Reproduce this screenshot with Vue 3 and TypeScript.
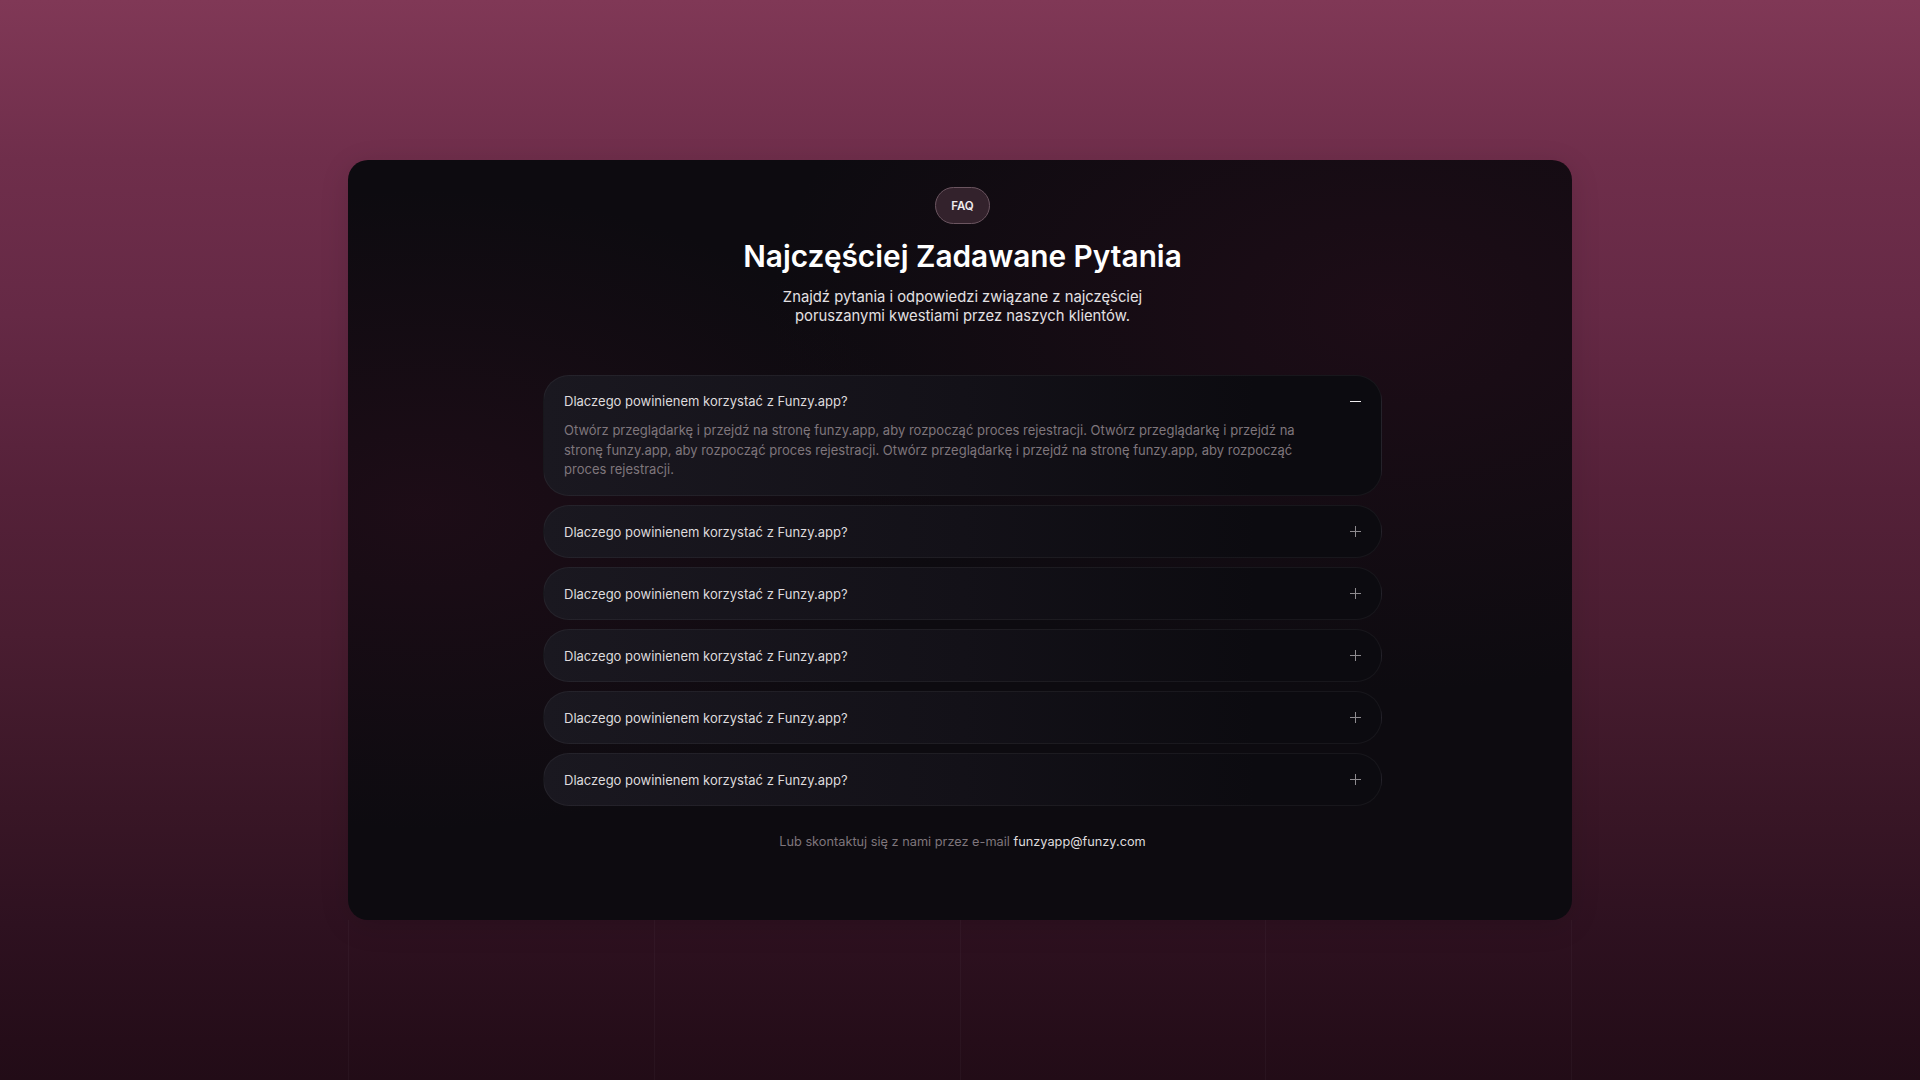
<script setup lang="ts">
interface Item { q: string; a?: string }
const answer = 'Otwórz przeglądarkę i przejdź na stronę funzy.app, aby rozpocząć proces rejestracji. Otwórz przeglądarkę i przejdź na stronę funzy.app, aby rozpocząć proces rejestracji. Otwórz przeglądarkę i przejdź na stronę funzy.app, aby rozpocząć proces rejestracji.'
const q = 'Dlaczego powinienem korzystać z Funzy.app?'
const items: Item[] = [{ q, a: answer }, { q }, { q }, { q }, { q }, { q }]
const gridCols = [0, 1, 2, 3]
</script>

<template>
  <div class="page">
    <div class="grid-lines" aria-hidden="true">
      <span v-for="c in gridCols" :key="c" class="grid-col"></span>
    </div>
    <main class="card">
      <span class="pill">FAQ</span>
      <h1 class="title">Najczęściej Zadawane Pytania</h1>
      <p class="sub">Znajdź pytania i odpowiedzi związane z najczęściej<br />poruszanymi kwestiami przez naszych klientów.</p>
      <div class="list">
        <section v-for="(it, i) in items" :key="i" class="item" :class="{ open: it.a }">
          <div class="row">
            <span class="q">{{ it.q }}</span>
            <svg class="icon" :class="{ dim: !it.a }" width="11" height="11" viewBox="0 0 11 11" fill="none">
              <path d="M0 5.5H11" stroke="currentColor" />
              <path v-if="!it.a" d="M5.5 0V11" stroke="currentColor" />
            </svg>
          </div>
          <p v-if="it.a" class="a">{{ it.a }}</p>
        </section>
      </div>
      <p class="contact">Lub skontaktuj się z nami przez e-mail <a class="mail">funzyapp@funzy.com</a></p>
    </main>
  </div>
</template>

<style>
html, body { margin: 0; background: #220c17; }
</style>

<style scoped>
.page {
  position: relative;
  width: 1920px;
  height: 1080px;
  overflow: hidden;
  box-sizing: border-box;
  padding-top: 160px;
  display: flex;
  justify-content: center;
  align-items: flex-start;
  font-family: Inter, "Liberation Sans", sans-serif;
  background: linear-gradient(180deg, #803856 0px, #6f2e4b 160px, #652945 315px, #552139 490px, #4a1d31 635px, #391626 808px, #2e1120 925px, #250d19 1040px, #220c17 1080px);
}
.grid-lines {
  position: absolute;
  left: 348px;
  top: 920px;
  width: 1224px;
  height: 160px;
  display: grid;
  grid-template-columns: repeat(4, 1fr);
  border-right: 1px solid rgba(255, 255, 255, 0.03);
  box-sizing: border-box;
}
.grid-col { border-left: 1px solid rgba(255, 255, 255, 0.03); }
.card {
  position: relative;
  width: 1224px;
  height: 760px;
  box-sizing: border-box;
  padding: 27px 0 0 5px;
  border-radius: 20px;
  display: flex;
  flex-direction: column;
  align-items: center;
  box-shadow: 0 6px 30px rgba(0, 0, 0, 0.12);
  background:
    radial-gradient(520px 320px at 6% 46%, rgba(70, 16, 40, 0.28), transparent 100%),
    radial-gradient(620px 380px at 85% 20%, rgba(70, 16, 40, 0.28), transparent 100%),
    #0d0b10;
}
.pill {
  box-sizing: border-box;
  width: 55px;
  height: 37px;
  border-radius: 19px;
  display: flex;
  align-items: center;
  justify-content: center;
  font-size: 11.5px;
  font-weight: 600;
  color: #f0ecee;
  background: #33222c;
  border: 1px solid #6b5560;
}
.title {
  margin: 14px 0 0;
  font-size: 29.8px;
  line-height: 36px;
  font-weight: 600;
  color: #fff;
}
.sub {
  margin: 14px 0 0;
  font-size: 14.8px;
  line-height: 19px;
  text-align: center;
  color: #e4e1e3;
}
.list {
  margin-top: 49px;
  width: 839px;
  display: flex;
  flex-direction: column;
  gap: 9px;
}
.item {
  box-sizing: border-box;
  border-radius: 26px;
  border: 1px solid rgba(255, 255, 255, 0.05);
  background: linear-gradient(90deg, #1a1820 0%, #131118 50%, #0c0b10 85%);
}
.row {
  height: 51px;
  padding: 0 20px;
  display: flex;
  align-items: center;
  justify-content: space-between;
}
.open .row { height: 45px; padding-top: 6px; box-sizing: border-box; align-items: flex-start; }
.open .q { margin-top: 11px; }
.open .icon { margin-top: 14px; }
.q { font-size: 13px; color: #dedbdd; }
.icon { color: #f0eef0; flex: none; }
.icon.dim { color: #8e8b8f; }
.a {
  margin: 0;
  padding: 0 84px 15.5px 20px;
  font-size: 13px;
  letter-spacing: 0.01px;
  line-height: 19.5px;
  color: #7f767c;
}
.contact {
  margin: 28px 0 0;
  font-size: 12.75px;
  color: #7f767c;
}
.mail { color: #dedbdd; }
</style>
